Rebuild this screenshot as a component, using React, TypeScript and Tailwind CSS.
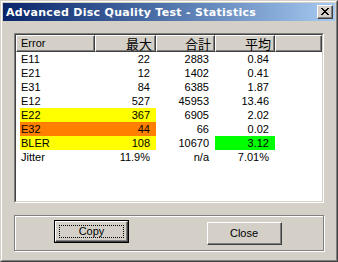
import React from 'react'

type Row = {
  name: string
  max: string
  total: string
  avg: string
  hl?: string
  avgHl?: string
}

const rows: Row[] = [
  { name: 'E11', max: '22', total: '2883', avg: '0.84' },
  { name: 'E21', max: '12', total: '1402', avg: '0.41' },
  { name: 'E31', max: '84', total: '6385', avg: '1.87' },
  { name: 'E12', max: '527', total: '45953', avg: '13.46' },
  { name: 'E22', max: '367', total: '6905', avg: '2.02', hl: 'bg-[#ffff00]' },
  { name: 'E32', max: '44', total: '66', avg: '0.02', hl: 'bg-[#ff8000]' },
  { name: 'BLER', max: '108', total: '10670', avg: '3.12', hl: 'bg-[#ffff00]', avgHl: 'bg-[#00ff00]' },
  { name: 'Jitter', max: '11.9%', total: 'n/a', avg: '7.01%' },
]

const cjk = "font-['Noto_Sans_CJK_JP',sans-serif]"

function HeaderCell({ w, children, right }: { w: string; children?: React.ReactNode; right?: boolean }) {
  return (
    <div className={`${w} h-full border-t border-l border-t-white border-l-white border-b border-r border-b-[#404040] border-r-[#404040]`}>
      <div
        className={`h-full flex items-center border-b border-r border-b-[#808080] border-r-[#808080] ${
          right ? 'justify-end pr-[2px]' : 'pl-[4px]'
        }`}
      >
        {children}
      </div>
    </div>
  )
}

function CloseGlyph() {
  return (
    <svg width="8" height="7" viewBox="0 0 8 7" shapeRendering="crispEdges">
      <path d="M0 0h2v1h-2zM6 0h2v1h-2zM1 1h2v1h-2zM5 1h2v1h-2zM2 2h4v1h-4zM3 3h2v1h-2zM2 4h4v1h-4zM1 5h2v1h-2zM5 5h2v1h-2zM0 6h2v1h-2zM6 6h2v1h-2z" fill="#000" />
    </svg>
  )
}

export default function App() {
  return (
    <div className="w-[338px] h-[262px] overflow-hidden bg-[#d4d0c8] font-['Liberation_Sans',Arial,sans-serif] text-[11px] text-black leading-none">
      {/* window frame */}
      <div className="w-full h-full border border-t-[#d4d0c8] border-l-[#d4d0c8] border-b-[#404040] border-r-[#404040]">
        <div className="w-full h-full border border-t-white border-l-white border-b-[#808080] border-r-[#808080] p-[1px]">
          {/* caption */}
          <div className="h-[18px] flex items-center justify-between bg-gradient-to-r from-[#0a246a] to-[#a6caf0] pl-[3px] pr-[2px]">
            <span className="text-white font-bold text-[11px] tracking-[0.3px] font-['DejaVu_Sans',sans-serif]">Advanced Disc Quality Test - Statistics</span>
            <div className="w-[16px] h-[14px] bg-[#d4d0c8] border border-t-white border-l-white border-b-[#404040] border-r-[#404040]">
              <div className="w-full h-full flex items-center justify-center border-b border-r border-b-[#808080] border-r-[#808080] pl-[1px]">
                <CloseGlyph />
              </div>
            </div>
          </div>

          {/* list view */}
          <div className="ml-[11px] mt-[12px] w-[310px] h-[170px] border border-t-[#808080] border-l-[#808080] border-b-white border-r-white">
            <div className="w-full h-full border border-t-[#404040] border-l-[#404040] border-b-[#d4d0c8] border-r-[#d4d0c8] bg-white">
              <div className="h-[17px] flex bg-[#d4d0c8]">
                <HeaderCell w="w-[79px]">Error</HeaderCell>
                <HeaderCell w="w-[61px]" right>
                  <span className={`${cjk} text-[13px]`}>最大</span>
                </HeaderCell>
                <HeaderCell w="w-[59px]" right>
                  <span className={`${cjk} text-[13px]`}>合計</span>
                </HeaderCell>
                <HeaderCell w="w-[60px]" right>
                  <span className={`${cjk} text-[13px]`}>平均</span>
                </HeaderCell>
                <HeaderCell w="flex-1" />
              </div>
              <div>
                {rows.map(r => (
                  <div key={r.name} className="h-[14px] flex pl-[4px]">
                    <div className={`w-[75px] flex items-center pl-[1px] ${r.hl ?? ''}`}>{r.name}</div>
                    <div className={`w-[61px] flex items-center justify-end pr-[6px] ${r.hl ?? ''}`}>{r.max}</div>
                    <div className="w-[59px] flex items-center justify-end pr-[6px]">{r.total}</div>
                    <div className={`w-[60px] flex items-center justify-end pr-[6px] ${r.avgHl ?? ''}`}>{r.avg}</div>
                  </div>
                ))}
              </div>
            </div>
          </div>

          {/* button group */}
          <div className="ml-[11px] mt-[12px] w-[310px] h-[36px] border border-[#808080] shadow-[inset_1px_1px_0_#fff,1px_1px_0_#fff] flex items-start">
            <button className="ml-[39px] mt-[4px] w-[75px] h-[23px] border border-black bg-[#d4d0c8] relative p-0">
              <div className="w-full h-full border border-t-white border-l-white border-b-[#404040] border-r-[#404040]">
                <div className="w-full h-full border-b border-r border-b-[#808080] border-r-[#808080]" />
              </div>
              <div className="absolute inset-[4px] border border-dotted border-black" />
              <span className="absolute inset-0 flex items-center justify-center pb-[1px]">Copy</span>
            </button>
            <button className="ml-[78px] mt-[6px] w-[75px] h-[23px] bg-[#d4d0c8] border border-t-white border-l-white border-b-[#404040] border-r-[#404040] p-0">
              <div className="w-full h-full flex items-center justify-center border-b border-r border-b-[#808080] border-r-[#808080]">
                Close
              </div>
            </button>
          </div>
        </div>
      </div>
    </div>
  )
}
